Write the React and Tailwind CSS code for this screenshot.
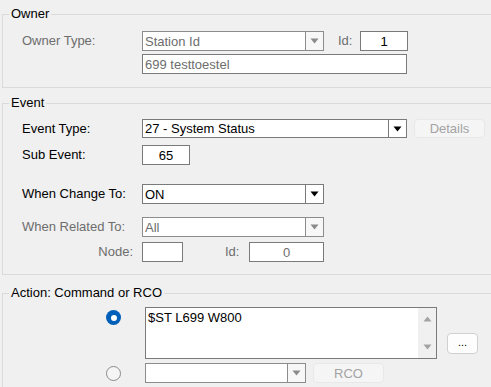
import React from "react";

const Arrow = ({ color = "#000", up = false }) => (
  <svg width="9" height="6" viewBox="0 0 9 6">
    {up ? (
      <polygon points="0.5,5.5 8.5,5.5 4.5,0.5" fill={color} />
    ) : (
      <polygon points="0.5,0.5 8.5,0.5 4.5,5.5" fill={color} />
    )}
  </svg>
);

const Combo = ({ text, w, h = 20, disabled = false }) => (
  <div
    className={`flex border ${disabled ? "border-[#8c8c8c]" : "border-[#7a7a7a]"} bg-white shrink-0`}
    style={{ width: w, height: h }}
  >
    <div className={`flex-1 pl-[2px] flex items-center leading-none ${disabled ? "text-[#6d6d6d]" : "text-black"}`}>
      {text}
    </div>
    <div className={`w-[18px] border-l ${disabled ? "border-[#8c8c8c] bg-[#f7f7f7]" : "border-[#7a7a7a] bg-white"} flex items-center justify-center`}>
      <Arrow color={disabled ? "#8a8a8a" : "#000"} />
    </div>
  </div>
);

const Box = ({ text, w, h = 20, disabled = false, center = false }) => (
  <div
    className={`flex items-center border border-[#7a7a7a] bg-white shrink-0 leading-none ${center ? "justify-center" : "pl-[2px]"} ${disabled ? "text-[#6d6d6d]" : "text-black"}`}
    style={{ width: w, height: h }}
  >
    {text}
  </div>
);

const DisabledBtn = ({ text, w, h }) => (
  <div
    className="flex items-center justify-center rounded-[4px] border border-[#e8e8e8] bg-[#f5f5f5] text-[#a3a3a3] shrink-0 leading-none"
    style={{ width: w, height: h }}
  >
    {text}
  </div>
);

export default function App() {
  return (
    <div className="w-[491px] h-[387px] overflow-hidden bg-[#f0f0f0] pt-[6px] font-['Liberation_Sans',Arial,sans-serif] text-[13px] text-black">
      {/* Owner */}
      <fieldset className="border border-[#dadada] ml-[2px] mr-[-12px]">
        <legend className="ml-[6px] px-[2px] leading-[16px]">Owner</legend>
        <div className="pt-[9px] pb-[13px] pl-[19px]">
          <div className="flex items-center h-[20px]">
            <div className="w-[120px] text-[#6d6d6d]">Owner Type:</div>
            <Combo text="Station Id" w={182} disabled />
            <div className="ml-[14px] w-[22px] text-[#6d6d6d]">Id:</div>
            <Box text="1" w={48} center />
          </div>
          <div className="flex items-center h-[20px] mt-[3px]">
            <div className="w-[120px]" />
            <Box text="699 testtoestel" w={265} disabled />
          </div>
        </div>
      </fieldset>

      {/* Event */}
      <fieldset className="border border-[#dadada] ml-[2px] mr-[-12px] mt-[7px]">
        <legend className="ml-[6px] px-[2px] leading-[16px]">Event</legend>
        <div className="pt-[8px] pb-[12px] pl-[19px]">
          <div className="flex items-center h-[19px]">
            <div className="w-[120px]">Event Type:</div>
            <Combo text="27 - System Status" w={265} h={19} />
            <div className="ml-[7px]">
              <DisabledBtn text="Details" w={71} h={19} />
            </div>
          </div>
          <div className="flex items-center h-[20px] mt-[7px]">
            <div className="w-[120px]">Sub Event:</div>
            <Box text="65" w={48} center />
          </div>
          <div className="flex items-center h-[20px] mt-[19px]">
            <div className="w-[120px]">When Change To:</div>
            <Combo text="ON" w={182} />
          </div>
          <div className="flex items-center h-[20px] mt-[13px]">
            <div className="w-[120px] text-[#6d6d6d]">When Related To:</div>
            <Combo text="All" w={182} disabled />
          </div>
          <div className="flex items-center h-[20px] mt-[5px]">
            <div className="w-[111px] text-right text-[#6d6d6d]">Node:</div>
            <div className="w-[9px]" />
            <Box text="" w={41} />
            <div className="ml-[42px] w-[24px] text-[#6d6d6d]">Id:</div>
            <Box text="0" w={75} center disabled />
          </div>
        </div>
      </fieldset>

      {/* Action */}
      <fieldset className="border border-[#dadada] ml-[2px] mr-[-12px] mt-[10px]">
        <legend className="ml-[6px] px-[2px] leading-[16px]">Action: Command or RCO</legend>
        <div className="pt-[6px] pb-[12px] pl-[103px]">
          <div className="flex items-start">
            <div className="w-[39px] pt-[3px]">
              <div className="w-[15px] h-[15px] rounded-full bg-[#005fb8] flex items-center justify-center">
                <div className="w-[6px] h-[6px] rounded-full bg-white" />
              </div>
            </div>
            <div className="flex w-[292px] h-[52px] border border-[#7a7a7a] bg-white">
              <div className="flex-1 pl-[2px] pt-[2px] leading-[15px]">$ST L699 W800</div>
              <div className="w-[18px] bg-[#f0f0f0] flex flex-col items-center justify-between py-[8px]">
                <Arrow color="#a3a3a3" up />
                <Arrow color="#a3a3a3" />
              </div>
            </div>
            <div className="ml-[10px] mt-[26px] w-[31px] h-[21px] rounded-[4px] border border-[#d0d0d0] bg-[#fdfdfd] flex items-center justify-center text-[11px] leading-none pb-[2px]">
              ...
            </div>
          </div>
          <div className="flex items-center h-[20px] mt-[4px]">
            <div className="w-[39px]">
              <div className="w-[15px] h-[15px] rounded-full border border-[#8a8a8a] bg-[#f5f5f5]" />
            </div>
            <Combo text="" w={161} disabled />
            <div className="ml-[7px]">
              <DisabledBtn text="RCO" w={71} h={20} />
            </div>
          </div>
        </div>
      </fieldset>
    </div>
  );
}
